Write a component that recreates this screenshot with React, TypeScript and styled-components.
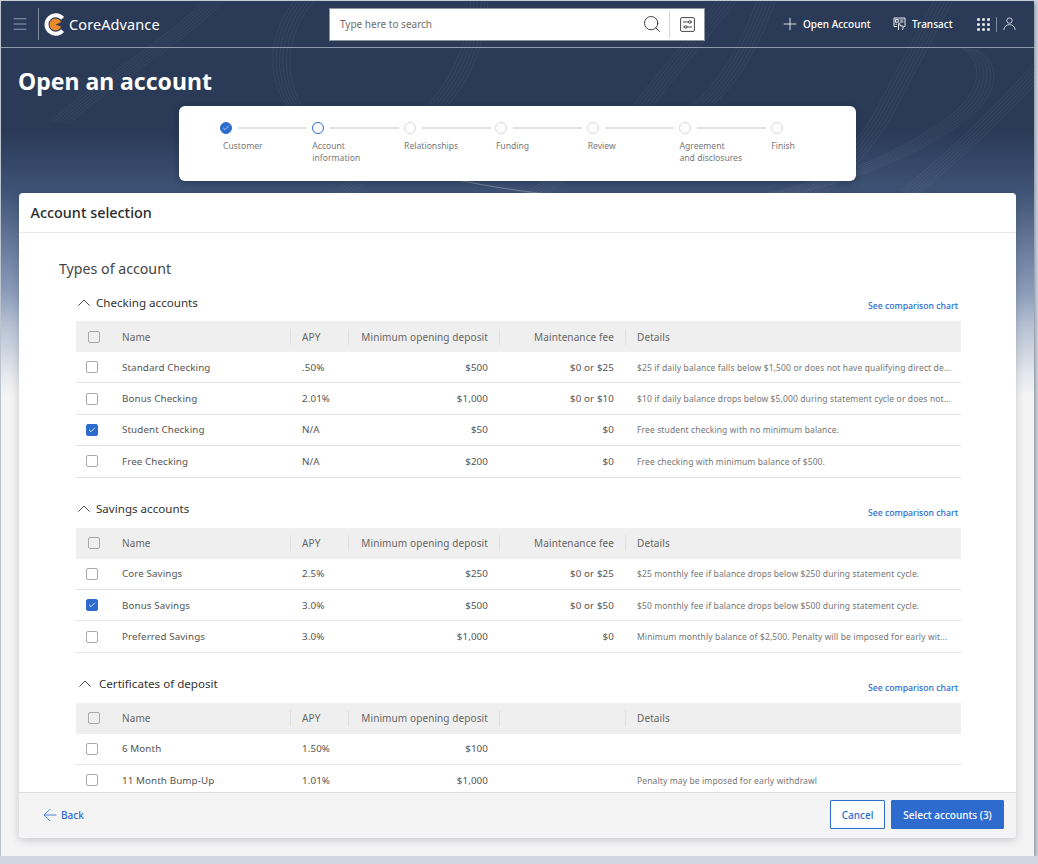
import React from "react";
import styled, { createGlobalStyle } from "styled-components";
import { ArrowLeft, Check, Menu, Plus, Search } from "lucide-react";

const GlobalStyle = createGlobalStyle`
  html, body {
    margin: 0;
    background: #cfd6e0;
    font-family: "Noto Sans", "Open Sans", sans-serif;
    overflow: hidden;
  }
`;

const Shell = styled.div`
  position: relative;
  width: 1033px;
  height: 855px;
  margin: 1px 0 0 1px;
  display: flex;
  flex-direction: column;
  overflow: hidden;
  box-shadow: 1px 2px 4px rgba(60, 70, 90, 0.55);
  background: linear-gradient(
    180deg,
    #2a3a57 0,
    #2a3a57 130px,
    #3e5376 190px,
    #8a9bb9 290px,
    #b3bfd2 322px,
    #e6e9ee 375px,
    #f4f4f5 395px
  );
`;

const Waves = styled.svg`
  position: absolute;
  left: 0;
  top: 0;
  pointer-events: none;
`;

const TopBar = styled.header`
  position: relative;
  height: 46px;
  flex: none;
  display: flex;
  align-items: center;
  border-bottom: 1px solid #8e99ab;
  color: #fff;
`;

const MenuButton = styled.div`
  width: 37px;
  display: flex;
  justify-content: center;
  color: #b6bfcc;
`;

const Brand = styled.div`
  width: 291px;
  height: 32px;
  border-left: 1px solid #7f8a9d;
  padding-left: 5px;
  box-sizing: border-box;
  display: flex;
  align-items: center;
  gap: 2px;
  font-size: 14.5px;
  letter-spacing: 0.1px;
`;

const SearchBox = styled.div`
  width: 376px;
  height: 33px;
  box-sizing: border-box;
  border: 1px solid #8d95a3;
  background: #fff;
  display: flex;
  align-items: center;
  padding: 0 9px 0 10px;
  color: #222;
`;

const Placeholder = styled.span`
  flex: 1;
  font-size: 10px;
  color: #6f6f6f;
`;

const SearchDivider = styled.span`
  width: 1px;
  height: 27px;
  background: #d5d5d5;
  margin: 0 10px 0 7px;
`;

const TopActions = styled.div`
  flex: 1;
  display: flex;
  align-items: center;
  padding-left: 75px;
  font-size: 10px;
  font-weight: 500;
`;

const TopAction = styled.span<{ $width: number; $gap: number }>`
  width: ${(p) => p.$width}px;
  display: flex;
  align-items: center;
  gap: ${(p) => p.$gap}px;
  flex: none;
`;

const TopDivider = styled.span`
  width: 1px;
  height: 15px;
  background: #7f8a9d;
  margin: 0 6px;
`;

const PageTitle = styled.h1`
  position: relative;
  margin: 0;
  height: 58px;
  flex: none;
  padding: 16px 0 0 17px;
  box-sizing: border-box;
  font-size: 23px;
  line-height: 34px;
  font-weight: 700;
  color: #fff;
`;

const StepperCard = styled.div`
  position: relative;
  flex: none;
  width: 677px;
  height: 75px;
  margin-left: 178px;
  box-sizing: border-box;
  padding: 16px 0 0 41px;
  background: #fff;
  border-radius: 6px;
  box-shadow: 0 2px 6px rgba(20, 30, 50, 0.35);
  display: flex;
`;

const Step = styled.div`
  width: 91.8px;
  flex: none;
`;

const StepTrack = styled.div`
  display: flex;
  align-items: center;
  height: 12px;
  gap: 6px;
`;

const StepDot = styled.span<{ $state: string }>`
  width: 12px;
  height: 12px;
  box-sizing: border-box;
  flex: none;
  border-radius: 50%;
  display: flex;
  align-items: center;
  justify-content: center;
  color: #fff;
  background: ${(p) => (p.$state === "done" ? "#2d6bcf" : "#fff")};
  border: 1px solid
    ${(p) => (p.$state === "todo" ? "#d9d9d9" : "#2d6bcf")};
  ${(p) => p.$state === "current" && "border-width: 1.5px;"}
`;

const StepLine = styled.span`
  width: 69px;
  height: 2px;
  background: #e3e3e3;
`;

const StepLabel = styled.div<{ $inset?: boolean }>`
  margin: 6px 0 0 ${(p) => (p.$inset ? 3 : 0.5)}px;
  font-size: 8.6px;
  line-height: 12px;
  color: #777;
  white-space: pre-line;
`;

const MainCard = styled.main`
  position: relative;
  flex: 1;
  min-height: 0;
  margin: 12px 18px 18px 18px;
  display: flex;
  flex-direction: column;
  background: #fff;
  border-radius: 4px;
  box-shadow: 0 2px 8px rgba(30, 40, 60, 0.22);
  overflow: hidden;
`;

const CardHeader = styled.div`
  flex: none;
  height: 40px;
  padding-left: 11.5px;
  box-sizing: border-box;
  display: flex;
  align-items: center;
  border-bottom: 1px solid #e8e8e8;
  font-size: 14.4px;
  font-weight: 500;
  color: #2b2b2b;
`;

const CardBody = styled.div`
  flex: 1;
  min-height: 0;
  overflow: hidden;
  padding: 26px 55px 0 40px;
`;

const BodyTitle = styled.h2`
  margin: 0 0 14px;
  font-size: 14.2px;
  line-height: 20px;
  font-weight: 400;
  color: #444;
`;

const SectionBlock = styled.section`
  margin-left: 17px;
  margin-bottom: 22px;
`;

const SectionHead = styled.div<{ $shift: number }>`
  height: 18px;
  margin-bottom: 10px;
  padding-left: ${(p) => p.$shift + 2}px;
  display: flex;
  align-items: center;
  color: #333;
`;

const SectionName = styled.span<{ $offset: number }>`
  margin-left: ${(p) => p.$offset}px;
  font-size: 11.6px;
  flex: 1;
`;

const ChartLink = styled.a`
  margin: 8px 3px 0 0;
  font-size: 8.7px;
  font-weight: 500;
  color: #2d6bcf;
`;

const columns = "46px 168px 58px 151px 126px minmax(0, 1fr)";

const HeaderRow = styled.div`
  display: grid;
  grid-template-columns: ${columns};
  height: 31px;
  align-items: center;
  background: #efefef;
  font-size: 10px;
  color: #666;
  letter-spacing: 0.1px;
`;

const HeaderCell = styled.div<{ $divider?: boolean; $right?: boolean }>`
  height: 16px;
  display: flex;
  align-items: center;
  box-sizing: border-box;
  justify-content: ${(p) => (p.$right ? "flex-end" : "flex-start")};
  padding: ${(p) => (p.$right ? "0 11px 0 0" : "0 0 0 11px")};
  border-left: ${(p) => (p.$divider ? "1px solid #e0e0e0" : "0")};
`;

const NameHeadCell = styled(HeaderCell)`
  padding: 0;
`;

const CheckCell = styled.div<{ $head?: boolean }>`
  padding-left: ${(p) => (p.$head ? 12 : 10)}px;
  display: flex;
  align-items: center;
`;

const Box = styled.span<{ $checked?: boolean }>`
  width: 12px;
  height: 12px;
  box-sizing: border-box;
  border-radius: 2px;
  border: 1px solid ${(p) => (p.$checked ? "#2d6bcf" : "#a9a9a9")};
  background: ${(p) => (p.$checked ? "#2d6bcf" : "#fff")};
  display: flex;
  align-items: center;
  justify-content: center;
  color: #fff;
`;

const HeadBox = styled(Box)`
  background: transparent;
`;

const Row = styled.div`
  display: grid;
  grid-template-columns: ${columns};
  height: 31.4px;
  box-sizing: border-box;
  align-items: center;
  border-bottom: 1px solid #e2e2e2;
  font-size: 9.8px;
  color: #555;
  letter-spacing: 0.1px;
`;

const Cell = styled.div<{ $right?: boolean }>`
  text-align: ${(p) => (p.$right ? "right" : "left")};
  padding: ${(p) => (p.$right ? "0 11px 0 0" : "0 0 0 12px")};
`;

const NameCell = styled.div``;

const DetailCell = styled.div`
  padding: 0 0 0 12px;
  font-size: 8.5px;
  letter-spacing: 0.12px;
  color: #757575;
  white-space: nowrap;
`;

const CardFooter = styled.footer`
  flex: none;
  height: 46px;
  box-sizing: border-box;
  border-top: 1px solid #dedede;
  background: #f4f4f4;
  display: flex;
  align-items: center;
  padding: 0 12px 2px 21px;
  gap: 6px;
`;

const BackLink = styled.a`
  flex: 1;
  display: flex;
  align-items: center;
  gap: 1px;
  font-size: 10px;
  font-weight: 500;
  color: #2d6bcf;
`;

const Button = styled.button<{ $primary?: boolean }>`
  height: 29px;
  border: 1px solid #2d6bcf;
  border-radius: 1px;
  font-family: inherit;
  font-size: 10px;
  font-weight: 500;
  padding: 0;
  width: ${(p) => (p.$primary ? 113 : 55)}px;
  color: ${(p) => (p.$primary ? "#fff" : "#2d6bcf")};
  background: ${(p) => (p.$primary ? "#2d6bcf" : "#fff")};
`;

type Account = {
  name: string;
  apy: string;
  deposit: string;
  fee?: string;
  details?: string;
  checked?: boolean;
};

type Group = {
  title: string;
  shift: number;
  offset: number;
  noFee?: boolean;
  rows: Account[];
};

const groups: Group[] = [
  {
    title: "Checking accounts",
    shift: 0,
    offset: 6,
    rows: [
      {
        name: "Standard Checking",
        apy: ".50%",
        deposit: "$500",
        fee: "$0 or $25",
        details:
          "$25 if daily balance falls below $1,500 or does not have qualifying direct de...",
      },
      {
        name: "Bonus Checking",
        apy: "2.01%",
        deposit: "$1,000",
        fee: "$0 or $10",
        details:
          "$10 if daily balance drops below $5,000 during statement cycle or does not...",
      },
      {
        name: "Student Checking",
        apy: "N/A",
        deposit: "$50",
        fee: "$0",
        details: "Free student checking with no minimum balance.",
        checked: true,
      },
      {
        name: "Free Checking",
        apy: "N/A",
        deposit: "$200",
        fee: "$0",
        details: "Free checking with minimum balance of $500.",
      },
    ],
  },
  {
    title: "Savings accounts",
    shift: 0,
    offset: 6,
    rows: [
      {
        name: "Core Savings",
        apy: "2.5%",
        deposit: "$250",
        fee: "$0 or $25",
        details: "$25 monthly fee if balance drops below $250 during statement cycle.",
      },
      {
        name: "Bonus Savings",
        apy: "3.0%",
        deposit: "$500",
        fee: "$0 or $50",
        details: "$50 monthly fee if balance drops below $500 during statement cycle.",
        checked: true,
      },
      {
        name: "Preferred Savings",
        apy: "3.0%",
        deposit: "$1,000",
        fee: "$0",
        details:
          "Minimum monthly balance of $2,500. Penalty will be imposed for early wit...",
      },
    ],
  },
  {
    title: "Certificates of deposit",
    shift: 1,
    offset: 8,
    noFee: true,
    rows: [
      { name: "6 Month", apy: "1.50%", deposit: "$100" },
      {
        name: "11 Month Bump-Up",
        apy: "1.01%",
        deposit: "$1,000",
        details: "Penalty may be imposed for early withdrawl",
      },
    ],
  },
];

const steps = [
  { label: "Customer", state: "done" },
  { label: "Account\ninformation", state: "current" },
  { label: "Relationships", state: "todo" },
  { label: "Funding", state: "todo" },
  { label: "Review", state: "todo" },
  { label: "Agreement\nand disclosures", state: "todo" },
  { label: "Finish", state: "todo" },
];

// bundles of parallel lines behind the banner
const wavePaths = [
  "M50 120 C105 72 165 40 214 -10",
  "M302 -10 C272 20 258 70 290 110 C325 150 420 178 540 192",
  "M372 118 C420 104 470 118 520 140 C570 160 640 150 700 96 C730 66 745 30 760 -10",
  "M470 -10 C470 40 450 90 400 130 C380 148 350 175 330 195",
  "M724 -10 L626 112 C600 140 560 170 520 195",
  "M938 -10 L872 115 C850 150 830 170 800 195",
  "M958 46 C985 58 982 92 945 118 C900 150 850 172 770 192",
  "M1033 62 C1000 100 960 140 900 190",
];

const BannerWaves = () => (
  <Waves width="1033" height="195" viewBox="0 0 1033 195" fill="none">
    {wavePaths.map((d) =>
      [0, 1, 2, 3, 4, 5].map((i) => (
        <path
          key={d + i}
          d={d}
          transform={`translate(${i * 3.4} ${i * 0.6})`}
          stroke="#ffffff"
          strokeOpacity="0.08"
          strokeWidth="0.8"
        />
      ))
    )}
  </Waves>
);

const Logo = () => (
  <svg width="23" height="23" viewBox="0 0 23 23" fill="none">
    <path
      d="M18.6 5.4 A9.2 9.2 0 1 0 18.6 17.6"
      stroke="#fff"
      strokeWidth="4"
    />
    <circle cx="11.5" cy="11.5" r="6" fill="#ef8a2c" />
    <path d="M11.6 11.5 L19 8.5 V14.5 Z" fill="#2a3a57" />
  </svg>
);

const FilterIcon = () => (
  <svg width="15" height="15" viewBox="0 0 15 15" fill="none" stroke="#333" strokeWidth="0.9">
    <rect x="0.6" y="0.6" width="13.8" height="13.8" rx="1.2" />
    <path d="M3 5 H8.5 M11 5 H12 M3 10 H4.5 M7 10 H12" />
    <circle cx="9.8" cy="5" r="1.3" />
    <circle cx="5.8" cy="10" r="1.3" />
  </svg>
);

const TransactIcon = () => (
  <svg width="13" height="14" viewBox="0 0 13 14" fill="none" stroke="#fff" strokeWidth="0.9">
    <path d="M4 9.5 H1 V1 H12 V9.5 H10.5" />
    <rect x="2.6" y="2.6" width="2.6" height="2.6" />
    <path d="M6.8 3 H10.4 M6.8 5 H10.4 M2.6 7.2 H4" />
    <path d="M5.5 13 V7 C5.5 6 7 6 7 7 V8.6 L10 9.2 V11.5 L9.2 13" />
  </svg>
);

const AppsIcon = () => (
  <svg width="13" height="13" viewBox="0 0 13 13" fill="#fff">
    {[1.5, 6.5, 11.5].map((y) =>
      [1.5, 6.5, 11.5].map((x) => (
        <rect key={`${x}-${y}`} x={x - 1.3} y={y - 1.3} width="2.6" height="2.6" rx="0.5" />
      ))
    )}
  </svg>
);

const UserIcon = () => (
  <svg width="13" height="14" viewBox="0 0 13 14" fill="none" stroke="#d8dde6" strokeWidth="0.9">
    <circle cx="6.5" cy="3.6" r="2.7" />
    <path d="M0.8 13 C1.2 9.6 3.4 7.6 6.5 7.6 C9.6 7.6 11.8 9.6 12.2 13" />
  </svg>
);

const Caret = () => (
  <svg width="12" height="7" viewBox="0 0 12 7" fill="none" stroke="#333" strokeWidth="0.9">
    <path d="M0.4 6.6 L6 1 L11.6 6.6" />
  </svg>
);

const Checkbox = ({ checked }: { checked?: boolean }) => (
  <Box $checked={checked}>{checked && <Check size={8} strokeWidth={2.5} />}</Box>
);

const AccountTable = ({ group }: { group: Group }) => (
  <SectionBlock>
    <SectionHead $shift={group.shift}>
      <Caret />
      <SectionName $offset={group.offset}>{group.title}</SectionName>
      <ChartLink>See comparison chart</ChartLink>
    </SectionHead>
    <HeaderRow>
      <CheckCell $head>
        <HeadBox />
      </CheckCell>
      <NameHeadCell>Name</NameHeadCell>
      <HeaderCell $divider>APY</HeaderCell>
      <HeaderCell $divider $right>
        Minimum opening deposit
      </HeaderCell>
      <HeaderCell $divider $right>
        {group.noFee ? "" : "Maintenance fee"}
      </HeaderCell>
      <HeaderCell $divider>Details</HeaderCell>
    </HeaderRow>
    {group.rows.map((row) => (
      <Row key={row.name}>
        <CheckCell>
          <Checkbox checked={row.checked} />
        </CheckCell>
        <NameCell>{row.name}</NameCell>
        <Cell>{row.apy}</Cell>
        <Cell $right>{row.deposit}</Cell>
        <Cell $right>{row.fee}</Cell>
        <DetailCell>{row.details}</DetailCell>
      </Row>
    ))}
  </SectionBlock>
);

const App = () => {
  return (
    <>
      <GlobalStyle />
      <Shell>
        <BannerWaves />
        <TopBar>
          <MenuButton>
            <Menu size={18} strokeWidth={1} />
          </MenuButton>
          <Brand>
            <Logo />
            CoreAdvance
          </Brand>
          <SearchBox>
            <Placeholder>Type here to search</Placeholder>
            <Search size={20} strokeWidth={1} />
            <SearchDivider />
            <FilterIcon />
          </SearchBox>
          <TopActions>
            <TopAction $width={113} $gap={3}>
              <Plus size={20} strokeWidth={1} />
              Open Account
            </TopAction>
            <TopAction $width={84} $gap={6}>
              <TransactIcon />
              Transact
            </TopAction>
            <AppsIcon />
            <TopDivider />
            <UserIcon />
          </TopActions>
        </TopBar>
        <PageTitle>Open an account</PageTitle>
        <StepperCard>
          {steps.map((step, i) => (
            <Step key={step.label}>
              <StepTrack>
                <StepDot $state={step.state}>
                  {step.state === "done" && <Check size={8} strokeWidth={2} />}
                </StepDot>
                {i < steps.length - 1 && <StepLine />}
              </StepTrack>
              <StepLabel $inset={i === 0}>{step.label}</StepLabel>
            </Step>
          ))}
        </StepperCard>
        <MainCard>
          <CardHeader>Account selection</CardHeader>
          <CardBody>
            <BodyTitle>Types of account</BodyTitle>
            {groups.map((group) => (
              <AccountTable key={group.title} group={group} />
            ))}
          </CardBody>
          <CardFooter>
            <BackLink>
              <ArrowLeft size={20} strokeWidth={1} />
              Back
            </BackLink>
            <Button>Cancel</Button>
            <Button $primary>Select accounts (3)</Button>
          </CardFooter>
        </MainCard>
      </Shell>
    </>
  );
};

export default App;
